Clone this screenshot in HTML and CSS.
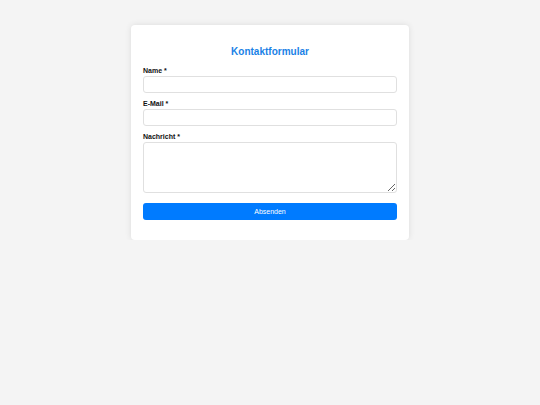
FILE: index.html
```html
<!DOCTYPE html>
<html lang="de">
<head>
  <meta charset="UTF-8">
  <meta name="viewport" content="width=device-width, initial-scale=1.0">
  <title>Kontaktformular</title>
  <link rel="stylesheet" href="styles.css">
</head>
<body>

  <div class="container">
    <h2>Kontaktformular</h2>
    <form class="contact-form">
      <div class="field">
        <label for="name">Name *</label>
        <input type="text" id="name">
      </div>
      <div class="field">
        <label for="email">E-Mail *</label>
        <input type="email" id="email">
      </div>
      <div class="field">
        <label for="message">Nachricht *</label>
        <textarea id="message"></textarea>
      </div>
      <button type="submit">Absenden</button>
    </form>
  </div>

</body>
</html>
```

FILE: styles.css
```css
body {
  margin: 0;
  font-family: 'Liberation Sans', Arial, sans-serif;
  background-color: #f4f4f4;
  color: #000;
}

.container {
  width: 278px;
  margin: 25px auto 0;
  background-color: #fff;
  padding: 20px 12px;
  border-radius: 4px;
  box-shadow: 0 0 6px rgba(0, 0, 0, 0.1);
  box-sizing: border-box;
}

h2 {
  font-size: 10px;
  line-height: 14px;
  color: #1a82e6;
  text-align: center;
  margin: 0 0 8px;
}

.field {
  margin-bottom: 7px;
}

label {
  display: block;
  font-size: 7px;
  line-height: 8px;
  font-weight: bold;
  color: #111;
  margin-bottom: 1px;
}

input,
textarea {
  display: block;
  width: 100%;
  height: 17px;
  padding: 2px 4px;
  border: 1px solid #e0e0e0;
  border-radius: 3px;
  box-sizing: border-box;
  font-family: inherit;
  font-size: 7px;
}

textarea {
  height: 51px;
}

button {
  display: block;
  width: 100%;
  height: 17px;
  margin-top: 10px;
  background-color: #007bff;
  color: #fff;
  border: none;
  border-radius: 3px;
  font-family: inherit;
  font-size: 7px;
  cursor: pointer;
}
```
